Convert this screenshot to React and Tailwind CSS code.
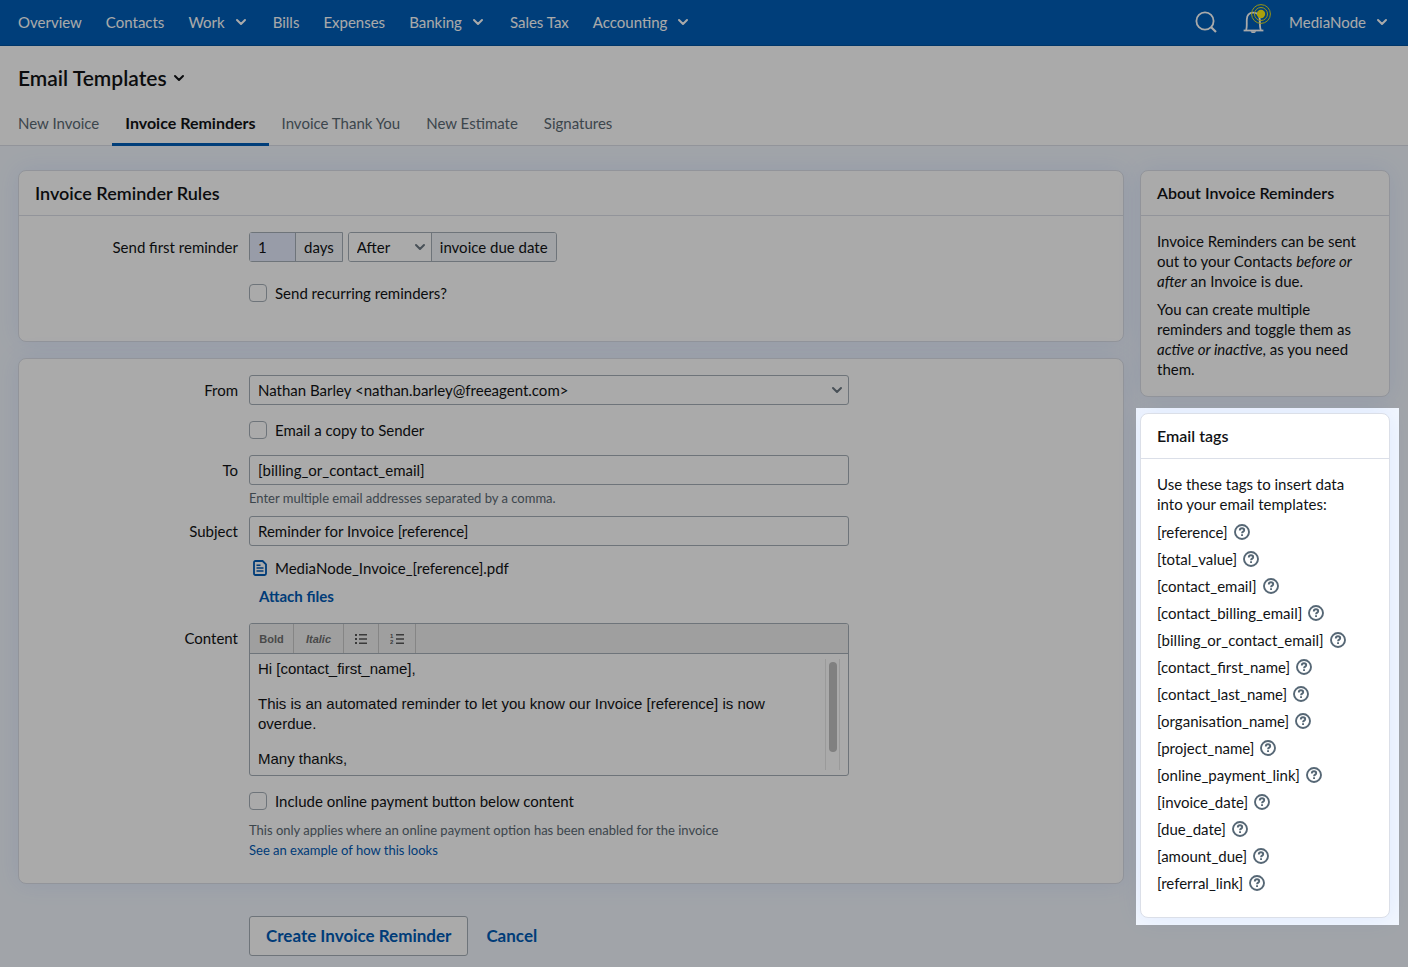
import { useState } from 'react'
import { ChevronDown } from 'lucide-react'

const NAV_ITEMS = [
  { label: 'Overview' },
  { label: 'Contacts' },
  { label: 'Work', menu: true },
  { label: 'Bills' },
  { label: 'Expenses' },
  { label: 'Banking', menu: true },
  { label: 'Sales Tax' },
  { label: 'Accounting', menu: true },
]

const TABS = ['New Invoice', 'Invoice Reminders', 'Invoice Thank You', 'New Estimate', 'Signatures']

const EMAIL_TAGS = [
  'reference',
  'total_value',
  'contact_email',
  'contact_billing_email',
  'billing_or_contact_email',
  'contact_first_name',
  'contact_last_name',
  'organisation_name',
  'project_name',
  'online_payment_link',
  'invoice_date',
  'due_date',
  'amount_due',
  'referral_link',
]

const inputClass = 'h-[30px] w-full rounded-[3px] border border-[#a5afb7] bg-white px-2 outline-none focus:border-[#005ab5]'

function SearchIcon() {
  return (
    <svg width="22" height="22" viewBox="0 0 22 22" fill="none" stroke="currentColor" strokeWidth="1.8">
      <circle cx="10" cy="10" r="8.6" />
      <path d="M16 16l5 5" strokeWidth="2.2" />
    </svg>
  )
}

function BellIcon() {
  return (
    <svg width="28" height="30" viewBox="0 0 28 30" fill="none">
      <path d="M3 26C4.2 24 3.6 20 3.8 15.5C4 11 6.5 8.7 10.2 8.7S16.6 11 16.8 15.5C17 20 16.6 24 18 26" stroke="currentColor" strokeWidth="1.8" />
      <path d="M.6 26.5h19.8" stroke="currentColor" strokeWidth="1.8" />
      <path d="M7.5 27.2h5.6c-.4 1.3-1.4 1.9-2.8 1.9s-2.4-.6-2.8-1.9z" fill="currentColor" />
      <circle cx="18" cy="10" r="4.2" fill="#fff012" />
      <circle cx="18" cy="10" r="6.5" stroke="#e6e01e" strokeWidth="1" />
      <circle cx="18" cy="10" r="9.4" stroke="#e6e01e" strokeWidth="1" />
    </svg>
  )
}

function HelpIcon() {
  return (
    <svg width="16" height="16" viewBox="0 0 16 16" fill="none" stroke="#566775" strokeWidth="1.9">
      <circle cx="8" cy="8" r="7" />
      <path d="M5.8 6.4c0-1.3.9-2.1 2.2-2.1s2.2.8 2.2 1.9c0 1.5-2.15 1.4-2.15 3" />
      <path d="M8.05 10.2v1.8" />
    </svg>
  )
}

function FileIcon() {
  return (
    <svg width="14" height="16" viewBox="0 0 14 16" fill="none" stroke="#005ab5" strokeWidth="1.8">
      <path d="M2.4 1h7.2L13 4.4v9.2c0 .8-.6 1.4-1.4 1.4H2.4C1.6 15 1 14.4 1 13.6V2.4C1 1.6 1.6 1 2.4 1z" />
      <path d="M3.5 5.2h4M3.5 8h7M3.5 10.9h7" strokeWidth="1.5" />
    </svg>
  )
}

function BulletListIcon() {
  return (
    <svg width="12" height="12" viewBox="0 0 12 12" fill="#575757">
      <path d="M0 1h2v2H0zM0 5h2v2H0zM0 9h2v2H0zM4 1h8v1.5H4zM4 5.2h8v1.5H4zM4 9.4h8v1.5H4z" />
    </svg>
  )
}

function NumberListIcon() {
  return (
    <svg width="14" height="12" viewBox="0 0 14 12" fill="#575757">
      <text x="0" y="5" fontSize="6" fontWeight="700" fontFamily="Liberation Sans, sans-serif">1</text>
      <text x="0" y="11" fontSize="6" fontWeight="700" fontFamily="Liberation Sans, sans-serif">2</text>
      <path d="M6 1h8v1.5H6zM6 5.2h8v1.5H6zM6 9.4h8v1.5H6z" />
    </svg>
  )
}

function Card({ children }) {
  return (
    <section className="rounded-lg border border-[#dbdfe8] bg-white shadow-[0_0_24px_rgba(60,110,255,0.1)]">
      {children}
    </section>
  )
}

function Checkbox({ id, label }) {
  return (
    <div className="flex h-[30px] items-center gap-2">
      <input
        id={id}
        type="checkbox"
        className="h-[18px] w-[18px] appearance-none rounded-[4px] border border-[#a5afb7] bg-white checked:bg-[#005ab5]"
      />
      <label htmlFor={id} className="leading-5">{label}</label>
    </div>
  )
}

function Row({ label, htmlFor, children }) {
  return (
    <div className="flex gap-[11px]">
      <div className="w-[219px] shrink-0 text-right leading-[30px]">
        {label && <label htmlFor={htmlFor}>{label}</label>}
      </div>
      <div className="min-w-0 max-w-[600px] flex-1">{children}</div>
    </div>
  )
}

export default function App() {
  const [activeTab, setActiveTab] = useState('Invoice Reminders')
  const [days, setDays] = useState('1')
  const [to, setTo] = useState('[billing_or_contact_email]')
  const [subject, setSubject] = useState('Reminder for Invoice [reference]')

  return (
    <div className="min-h-screen overflow-hidden bg-[#f2f7fe] font-['Lato',sans-serif] text-[15px] leading-5 text-[#111315]">
      <header className="flex h-[46px] items-center justify-between border-b border-[#00519e] bg-[#005eb8] px-[18px] pb-0.5 text-white">
        <nav className="flex gap-6">
          {NAV_ITEMS.map(({ label, menu }) => (
            <a key={label} href="#" className="flex items-center gap-2">
              {label}
              {menu && <ChevronDown size={16} strokeWidth={3} />}
            </a>
          ))}
        </nav>
        <div className="flex items-center">
          <button type="button" aria-label="Search" className="mr-[26px]">
            <SearchIcon />
          </button>
          <button type="button" aria-label="Notifications" className="mr-[18px] pb-1.5">
            <BellIcon />
          </button>
          <button type="button" className="flex items-center gap-2">
            MediaNode
            <ChevronDown size={16} strokeWidth={3} />
          </button>
        </div>
      </header>

      <div className="border-b border-[#dbdfe8] bg-white px-[18px] pt-5">
        <h1 className="flex items-center gap-1 text-[21px] leading-6 font-semibold">
          Email Templates
          <ChevronDown size={16} strokeWidth={3} />
        </h1>
        <div role="tablist" className="-mx-[13px] mt-3 -mb-px flex">
          {TABS.map((tab) => (
            <button
              key={tab}
              type="button"
              role="tab"
              aria-selected={tab === activeTab}
              onClick={() => setActiveTab(tab)}
              className={
                tab === activeTab
                  ? 'h-11 border-b-[3px] border-[#005eb8] px-[13px] text-base font-bold'
                  : 'h-11 border-b-[3px] border-transparent px-[13px] text-[#5b6973]'
              }
            >
              {tab}
            </button>
          ))}
        </div>
      </div>

      <div className="flex items-start gap-4 px-[18px] pt-6">
        <main className="flex min-w-0 flex-1 flex-col gap-4">
          <Card>
            <h2 className="border-b border-[#dbdfe8] px-4 py-3 text-lg leading-5 font-semibold">Invoice Reminder Rules</h2>
            <div className="flex flex-col gap-4 pt-4 pb-[33px]">
              <Row label="Send first reminder" htmlFor="days">
                <div className="flex gap-[5px]">
                  <div className="flex h-[30px] rounded-l-[3px] border border-[#a5afb7]">
                    <input
                      id="days"
                      value={days}
                      onChange={(e) => setDays(e.target.value)}
                      className="w-[46px] border-r border-[#a5afb7] bg-[#e4ebfc] px-2 outline-none"
                    />
                    <span className="bg-[#f2f5f9] px-2 leading-7">days</span>
                  </div>
                  <div className="flex h-[30px] overflow-hidden rounded-[3px] border border-[#a5afb7]">
                    <div className="relative w-[83px] border-r border-[#a5afb7]">
                      <select aria-label="Before or after" defaultValue="After" className="h-full w-full appearance-none bg-white px-2">
                        <option>Before</option>
                        <option>After</option>
                      </select>
                      <ChevronDown size={16} strokeWidth={3} className="pointer-events-none absolute top-1.5 right-[3px] text-[#6c7983]" />
                    </div>
                    <span className="bg-[#f2f5f9] px-2 leading-7">invoice due date</span>
                  </div>
                </div>
              </Row>
              <Row>
                <Checkbox id="recurring" label="Send recurring reminders?" />
              </Row>
            </div>
          </Card>

          <Card>
            <div className="flex flex-col gap-2.5 pt-4 pb-[23px]">
              <Row label="From" htmlFor="from">
                <div className="relative">
                  <select id="from" className={`${inputClass} appearance-none`}>
                    <option>Nathan Barley &lt;nathan.barley@freeagent.com&gt;</option>
                  </select>
                  <ChevronDown size={16} strokeWidth={3} className="pointer-events-none absolute top-[7px] right-1 text-[#6c7983]" />
                </div>
              </Row>
              <Row>
                <Checkbox id="copy" label="Email a copy to Sender" />
              </Row>
              <Row label="To" htmlFor="to">
                <input id="to" value={to} onChange={(e) => setTo(e.target.value)} className={inputClass} />
                <p className="mt-[5px] text-[13px] leading-4 text-[#5b6973]">Enter multiple email addresses separated by a comma.</p>
              </Row>
              <Row label="Subject" htmlFor="subject">
                <input id="subject" value={subject} onChange={(e) => setSubject(e.target.value)} className={inputClass} />
                <div className="mt-3 flex items-center gap-2 pl-1">
                  <FileIcon />
                  MediaNode_Invoice_[reference].pdf
                </div>
                <button type="button" className="mt-2 ml-2.5 block font-bold text-[#005ab5]">Attach files</button>
              </Row>
              <div className="pt-[7px]">
                <Row label="Content">
                  <div className="overflow-hidden rounded-[3px] border border-[#a5afb7]">
                    <div className="flex h-[30px] border-b border-[#a5afb7] bg-[#efefef] font-['Liberation_Sans',sans-serif] text-[11px] text-[#6e6e6e]">
                      <button type="button" className="w-11 border-r border-[#c8c8c8] font-bold">Bold</button>
                      <button type="button" className="w-[50px] border-r border-[#c8c8c8] font-bold italic">Italic</button>
                      <button type="button" aria-label="Bulleted list" className="flex w-[35px] items-center justify-center border-r border-[#c8c8c8]">
                        <BulletListIcon />
                      </button>
                      <button type="button" aria-label="Numbered list" className="flex w-[37px] items-center justify-center border-r border-[#c8c8c8]">
                        <NumberListIcon />
                      </button>
                    </div>
                    <div className="flex h-[121px] gap-1 px-2 py-[5px]">
                      <div
                        role="textbox"
                        aria-label="Content"
                        aria-multiline="true"
                        contentEditable
                        suppressContentEditableWarning
                        className="flex-1 space-y-[15px] font-['Liberation_Sans',sans-serif] text-[15px] leading-5 outline-none"
                      >
                        <p>Hi [contact_first_name],</p>
                        <p>This is an automated reminder to let you know our Invoice [reference] is now overdue.</p>
                        <p>Many thanks,</p>
                      </div>
                      <div className="w-[15px] border-x border-[#e8e8e8] px-[3px] pt-[3px]">
                        <div className="h-[90px] w-2 rounded-full bg-[#c1c1c1]" />
                      </div>
                    </div>
                  </div>
                </Row>
              </div>
              <Row>
                <Checkbox id="payment" label="Include online payment button below content" />
                <p className="mt-1 text-[13px] leading-5 text-[#5b6973]">This only applies where an online payment option has been enabled for the invoice</p>
                <a href="#" className="block text-[13px] leading-5 text-[#005ab5]">See an example of how this looks</a>
              </Row>
            </div>
          </Card>

          <div className="flex items-center gap-[18px] pt-4 pb-3 pl-[231px] text-[17px] font-bold text-[#005ab5]">
            <button type="submit" className="h-10 rounded-[3px] border border-[#a5afb7] bg-white px-4">Create Invoice Reminder</button>
            <a href="#">Cancel</a>
          </div>
        </main>

        <aside className="flex w-[250px] shrink-0 flex-col gap-4">
          <Card>
            <h3 className="border-b border-[#dbdfe8] px-4 py-3 text-base leading-5 font-semibold">About Invoice Reminders</h3>
            <div className="space-y-2 px-4 pt-[15px] pb-[17px]">
              <p>Invoice Reminders can be sent out to your Contacts <em>before or after</em> an Invoice is due.</p>
              <p>You can create multiple reminders and toggle them as <em>active or inactive</em>, as you need them.</p>
            </div>
          </Card>

          <div className="relative z-10">
            <Card>
              <h3 className="border-b border-[#dbdfe8] px-4 py-3 text-base leading-5 font-semibold">Email tags</h3>
              <div className="px-4 pt-[15px] pb-6">
                <p>Use these tags to insert data into your email templates:</p>
                <ul className="mt-2 space-y-[7px]">
                  {EMAIL_TAGS.map((tag) => (
                    <li key={tag} className="flex items-center gap-1.5">
                      [{tag}]
                      <button type="button" aria-label={`About ${tag}`}>
                        <HelpIcon />
                      </button>
                    </li>
                  ))}
                </ul>
              </div>
            </Card>
            {/* spotlight: the spread shadow dims the rest of the page */}
            <div className="pointer-events-none absolute -top-[5px] -right-[9px] -bottom-[7px] -left-1 shadow-[0_0_0_2000px_rgba(0,0,0,0.333)]" />
          </div>
        </aside>
      </div>
    </div>
  )
}
